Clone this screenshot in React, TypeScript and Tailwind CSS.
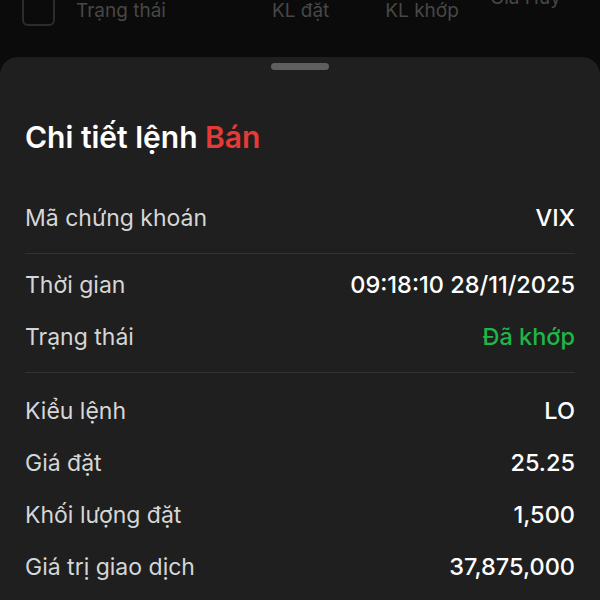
import React from "react";

const Row = ({ label, value, valueClass = "text-white", className = "" }: { label: string; value: string; valueClass?: string; className?: string }) => (
  <div className={`flex h-[52px] items-center justify-between ${className}`}>
    <span className="text-[23px] text-[#d6d6d6]">{label}</span>
    <span className={`text-[23.5px] font-medium ${valueClass}`}>{value}</span>
  </div>
);

export default function App() {
  return (
    <div className="flex h-[600px] w-[600px] flex-col overflow-hidden bg-[#0b0b0b]" style={{ fontFamily: "Inter, 'Noto Sans', sans-serif" }}>
      <div className="h-[57px] shrink-0 overflow-hidden">
        <div className="relative -mt-[9px] flex h-[40px] items-center text-[19px] text-[#474747]">
          <div className="ml-[22px] h-[30px] w-[33px] rounded-[6px] border-2 border-[#2c2c2c]" />
          <span className="ml-[21px]">Trạng thái</span>
          <span className="ml-[106px]">KL đặt</span>
          <span className="ml-[56px]">KL khớp</span>
          <span className="absolute left-[490px] top-[-7px]">Giá Hủy</span>
        </div>
      </div>
      <div className="flex flex-1 flex-col rounded-t-[18px] bg-[#1f1f1f] px-[25px]">
        <div className="mx-auto mt-[6px] h-[7px] w-[58px] rounded-full bg-[#5f5f5f]" />
        <h1 className="mt-[50px] text-[30px] font-semibold leading-[34px] text-white">
          Chi tiết lệnh <span className="text-[#e53a35]">Bán</span>
        </h1>
        <Row label="Mã chứng khoán" value="VIX" className="mt-[38px]" />
        <div className="mt-[9px] h-px bg-[#333333]" />
        <Row label="Thời gian" value="09:18:10 28/11/2025" className="mt-[5px]" />
        <Row label="Trạng thái" value="Đã khớp" valueClass="text-[#1fb548]" />
        <div className="mt-[9px] h-px bg-[#333333]" />
        <Row label="Kiểu lệnh" value="LO" className="mt-[12px]" />
        <Row label="Giá đặt" value="25.25" />
        <Row label="Khối lượng đặt" value="1,500" />
        <Row label="Giá trị giao dịch" value="37,875,000" />
      </div>
    </div>
  );
}
